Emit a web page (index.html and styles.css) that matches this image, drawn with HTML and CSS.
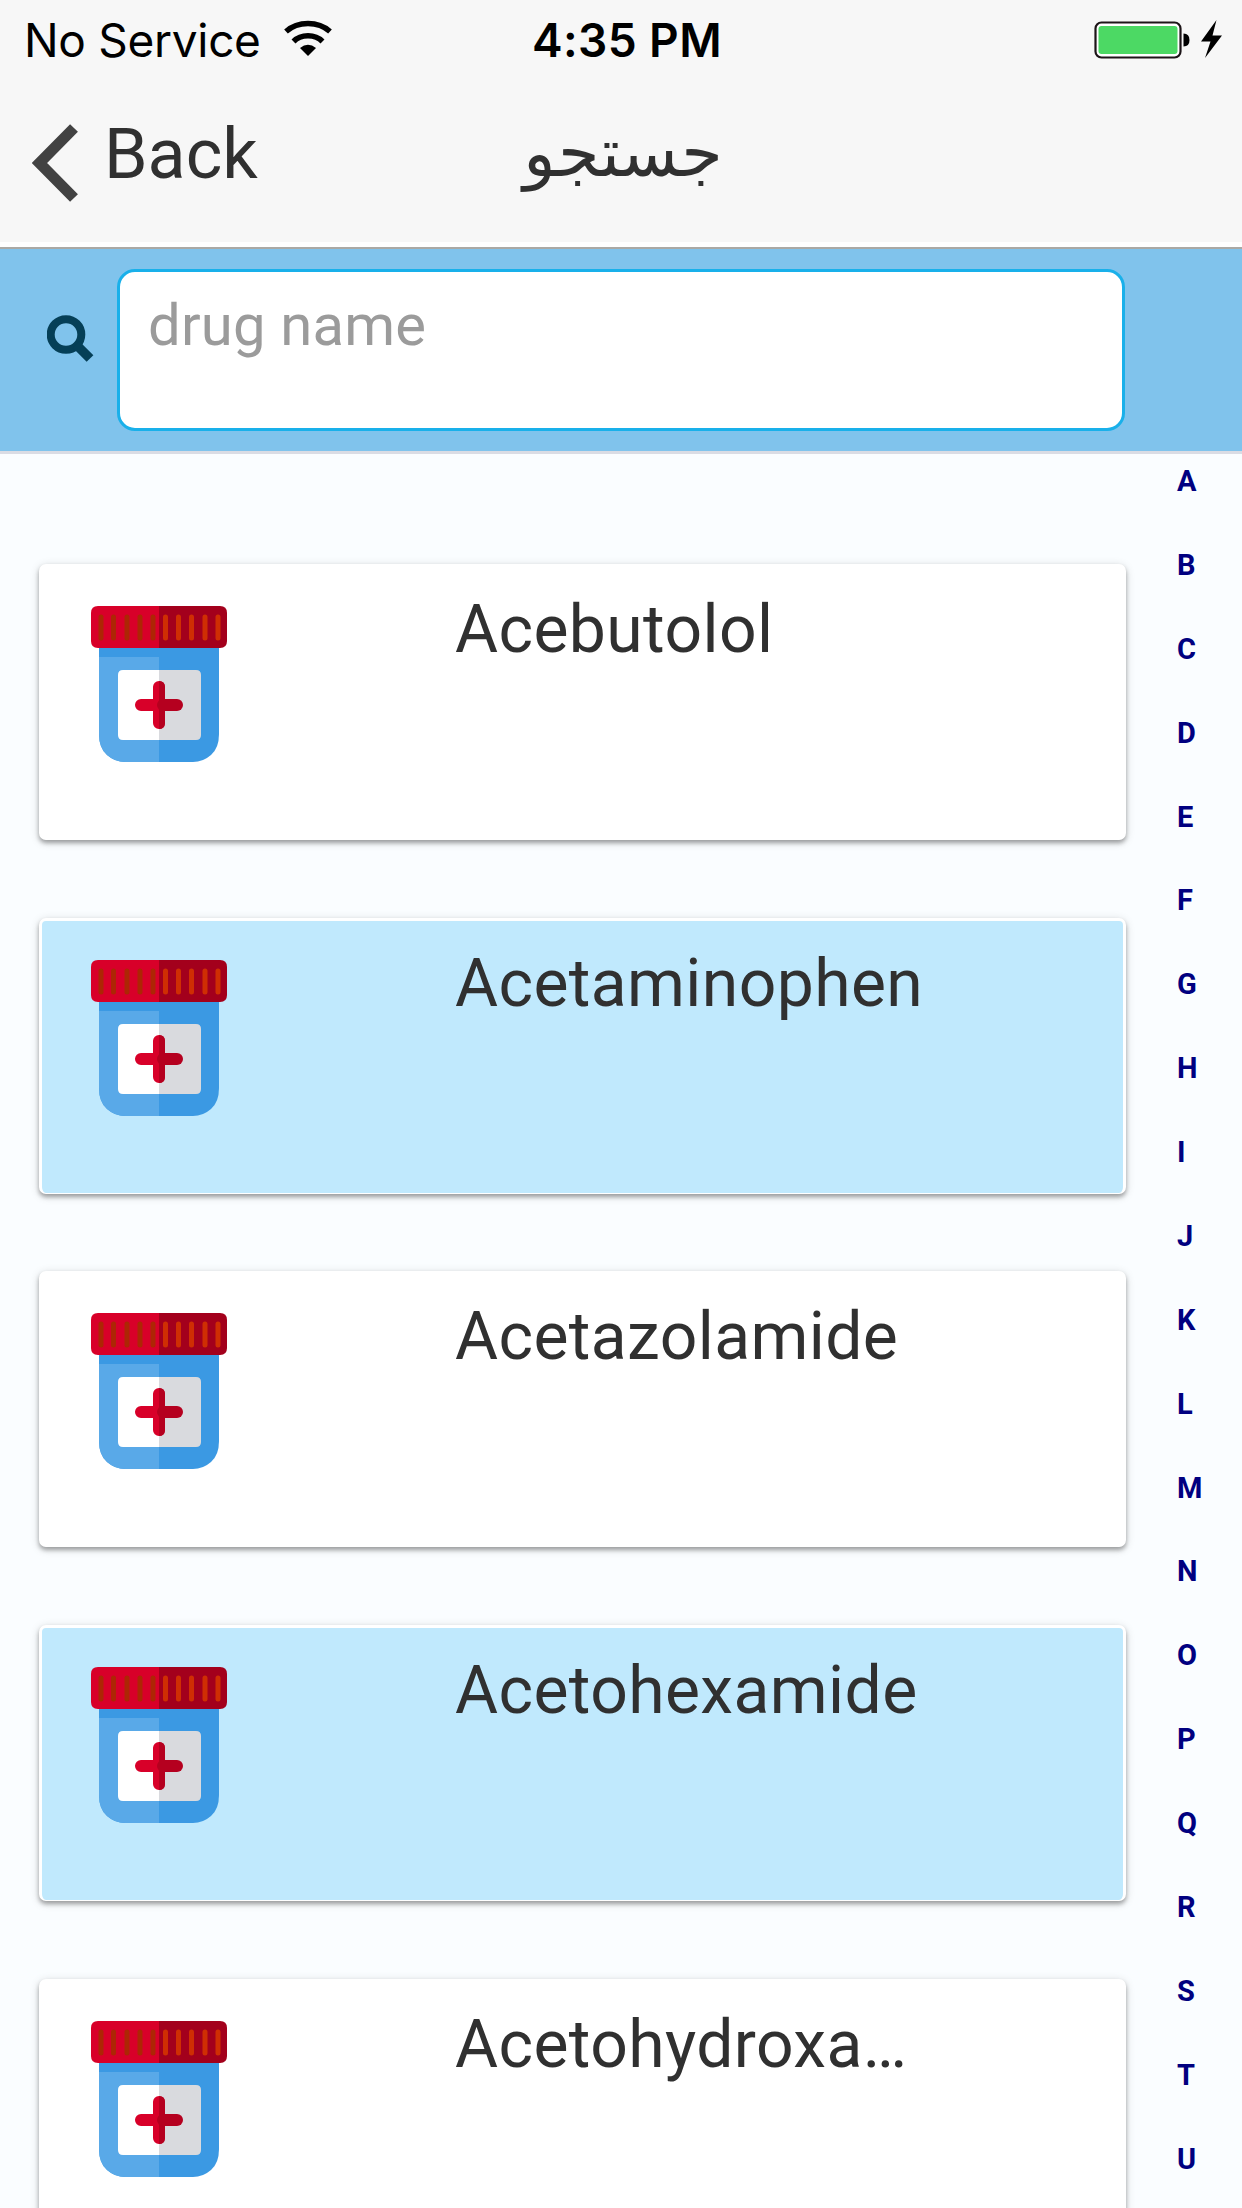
FILE: index.html
```html
<!DOCTYPE html>
<html lang="en">
<head>
    <meta charset="UTF-8">
    <title>جستجو</title>
    <link rel="stylesheet" href="styles.css">
</head>
<body>
    <!-- shared drug icon -->
    <svg class="defs" width="0" height="0">
        <symbol id="bottle" viewBox="0 0 136 156">
            <path fill="#3b99e3" d="M8 36h120v92q0 14-8 21t-18 7H34q-10 0-18-7t-8-21z"/>
            <path fill="#59a9e8" d="M8 51h60v105H34q-10 0-18-7t-8-21z"/>
            <path fill="#d9dade" d="M68 64h37q5 0 5 5v60q0 5-5 5H68z"/>
            <path fill="#fff" d="M68 64H32q-5 0-5 5v60q0 5 5 5h36z"/>
            <path fill="#d80029" d="M68 0H7Q0 0 0 7v28q0 7 7 7h61z"/>
            <path fill="#a3001c" d="M68 0h61q7 0 7 7v28q0 7-7 7H68z"/>
            <path stroke="#ad2604" stroke-width="5" stroke-linecap="round" d="M10 11v21M22.500 11v21M36 11v21M49 11v21M62 11v21"/>
            <path stroke="#cf2e03" stroke-width="5" stroke-linecap="round" d="M74.500 11v21M87.500 11v21M100.500 11v21M114 11v21M127 11v21"/>
            <path stroke="#d80029" stroke-width="12" stroke-linecap="round" d="M50 99h18M68 81v36"/>
            <path stroke="#b5001f" stroke-width="12" stroke-linecap="round" d="M72 99h14"/>
            <path fill="#b5001f" d="M68 75q6 0 6 6v36q0 6-6 6z"/>
        </symbol>
    </svg>

    <div class="status-bar">
        <div class="carrier">
            <span>No Service</span>
            <svg class="wifi" width="48" height="36" viewBox="0 0 48 36">
                <g fill="none" stroke="#000" stroke-width="5.500">
                    <path d="M2 11.500Q11 3.500 24 3.500T46 11.500"/>
                    <path d="M9.500 21.500Q15 15.800 24 15.800T38.500 21.500"/>
                </g>
                <path d="M16 28Q24 21.500 32 28L24 36z"/>
            </svg>
        </div>
        <div class="time">4:35 PM</div>
        <div class="power">
            <svg width="130" height="40" viewBox="0 0 130 40">
                <rect x="1.500" y="2.500" width="85" height="35" rx="6" fill="#fff" stroke="#1d1518" stroke-width="2.200"/>
                <rect x="4.500" y="6" width="79" height="28" rx="3" fill="#4cd964"/>
                <path d="M89.500 13.500q6 0 6 6.500t-6 6.500z"/>
                <path d="M122.500 0L107 21.500h9.500L111 38l17-22.500h-9.500z"/>
            </svg>
        </div>
    </div>

    <div class="nav-bar">
        <a class="back">
            <svg width="46" height="78" viewBox="0 0 46 78">
                <path fill="none" stroke="#424242" stroke-width="11" d="M42 4L7.500 39 42 74"/>
            </svg>
            <span>Back</span>
        </a>
        <h1 class="title" lang="fa" dir="rtl">جستجو</h1>
    </div>

    <div class="search-bar">
        <svg class="search-icon" width="47" height="47" viewBox="0 0 47 47">
            <g fill="none" stroke="#053f57">
                <circle cx="19" cy="19.500" r="15.300" stroke-width="8"/>
                <path stroke-width="9.500" d="M29 29.500L43 43.500"/>
            </g>
        </svg>
        <input class="search-input" type="text" placeholder="drug name">
    </div>

    <div class="content">
        <div class="drug-list">
            <div class="card">
                <svg class="icon"><use href="#bottle"/></svg>
                <span class="name">Acebutolol</span>
            </div>
            <div class="card blue">
                <svg class="icon"><use href="#bottle"/></svg>
                <span class="name">Acetaminophen</span>
            </div>
            <div class="card">
                <svg class="icon"><use href="#bottle"/></svg>
                <span class="name">Acetazolamide</span>
            </div>
            <div class="card blue">
                <svg class="icon"><use href="#bottle"/></svg>
                <span class="name">Acetohexamide</span>
            </div>
            <div class="card">
                <svg class="icon"><use href="#bottle"/></svg>
                <span class="name">Acetohydroxa…</span>
            </div>
        </div>
        <div class="letters">
            <span>A</span>
            <span>B</span>
            <span>C</span>
            <span>D</span>
            <span>E</span>
            <span>F</span>
            <span>G</span>
            <span>H</span>
            <span>I</span>
            <span>J</span>
            <span>K</span>
            <span>L</span>
            <span>M</span>
            <span>N</span>
            <span>O</span>
            <span>P</span>
            <span>Q</span>
            <span>R</span>
            <span>S</span>
            <span>T</span>
            <span>U</span>
        </div>
    </div>
</body>
</html>
```
FILE: styles.css
```css
* {
    box-sizing: border-box;
}

body {
    font-family: Roboto, sans-serif;
    background-color: #fafdff;
    color: #303030;
    margin: 0;
    height: 2208px;
    display: flex;
    flex-direction: column;
    overflow: hidden;
}

svg {
    display: block;
    flex-shrink: 0;
}

.defs {
    position: absolute;
}

/* status bar */
.status-bar {
    height: 80px;
    flex-shrink: 0;
    display: grid;
    grid-template-columns: 1fr auto 1fr;
    padding: 0 18px 0 24px;
    background-color: #f7f7f7;
    color: #000;
    font-family: Inter, sans-serif;
    font-size: 46px;
    line-height: 80px;
}

.carrier {
    display: flex;
    align-items: flex-start;
    gap: 23px;
    letter-spacing: -0.3px;
}

.wifi {
    margin-top: 20px;
}

.time {
    font-weight: 600;
    letter-spacing: 0.4px;
    padding-left: 6px;
}

.power {
    display: flex;
    justify-content: flex-end;
    padding-top: 20px;
}

/* nav bar */
.nav-bar {
    height: 169px;
    flex-shrink: 0;
    display: grid;
    grid-template-columns: 1fr auto 1fr;
    background-color: #f7f7f7;
    border-bottom: 2px solid #aaa9a5;
    box-shadow: inset 0 -5px #fff;
}

.back {
    display: flex;
    padding-left: 32px;
    font-size: 70px;
    line-height: 82px;
}

.back svg {
    margin: 44px 26px 0 0;
}

.back span {
    margin-top: 33px;
}

.title {
    margin: 33px 0 0;
    padding-left: 4px;
    font-family: "DejaVu Sans", sans-serif;
    font-size: 67px;
    font-weight: normal;
    line-height: 80px;
}

/* search */
.search-bar {
    height: 205px;
    flex-shrink: 0;
    display: flex;
    align-items: flex-start;
    padding: 20px 117px 0 47px;
    background-color: #80c3ec;
    border-bottom: 3px solid #dadce4;
}

.search-icon {
    margin: 46px 23px 0 0;
}

.search-input {
    flex: 1;
    height: 162px;
    padding: 0 28px 50px;
    border: 3px solid #19b0ea;
    border-radius: 18px;
    background-color: #fff;
    font-family: Roboto, sans-serif;
    font-size: 58px;
    letter-spacing: 0.2px;
}

.search-input::placeholder {
    color: #9b9b9b;
}

/* drug list */
.content {
    display: flex;
    align-items: flex-start;
}

.drug-list {
    width: 1126px;
    padding: 110px 0 0 39px;
    display: flex;
    flex-direction: column;
    gap: 77.7px;
}

.card {
    height: 276px;
    display: flex;
    align-items: flex-start;
    padding: 42px 49px;
    border: 3px solid #fff;
    border-bottom-width: 1px;
    border-radius: 7px;
    background-color: #fff;
    box-shadow: 0 3px 4px rgba(0, 0, 0, 0.3), 0 2px 10px rgba(0, 0, 0, 0.16);
}

.blue {
    background-color: #c0e9fd;
}

.icon {
    width: 136px;
    height: 156px;
    margin-top: -3px;
}

.name {
    margin: -18px 0 0 228px;
    font-size: 66px;
    line-height: 78px;
    letter-spacing: 0.4px;
}

.letters {
    padding: 0 0 0 51px;
    display: flex;
    flex-direction: column;
    color: #000080;
    font-size: 29px;
    font-weight: bold;
}

.letters span {
    height: 83.88px;
    line-height: 54px;
}
```
